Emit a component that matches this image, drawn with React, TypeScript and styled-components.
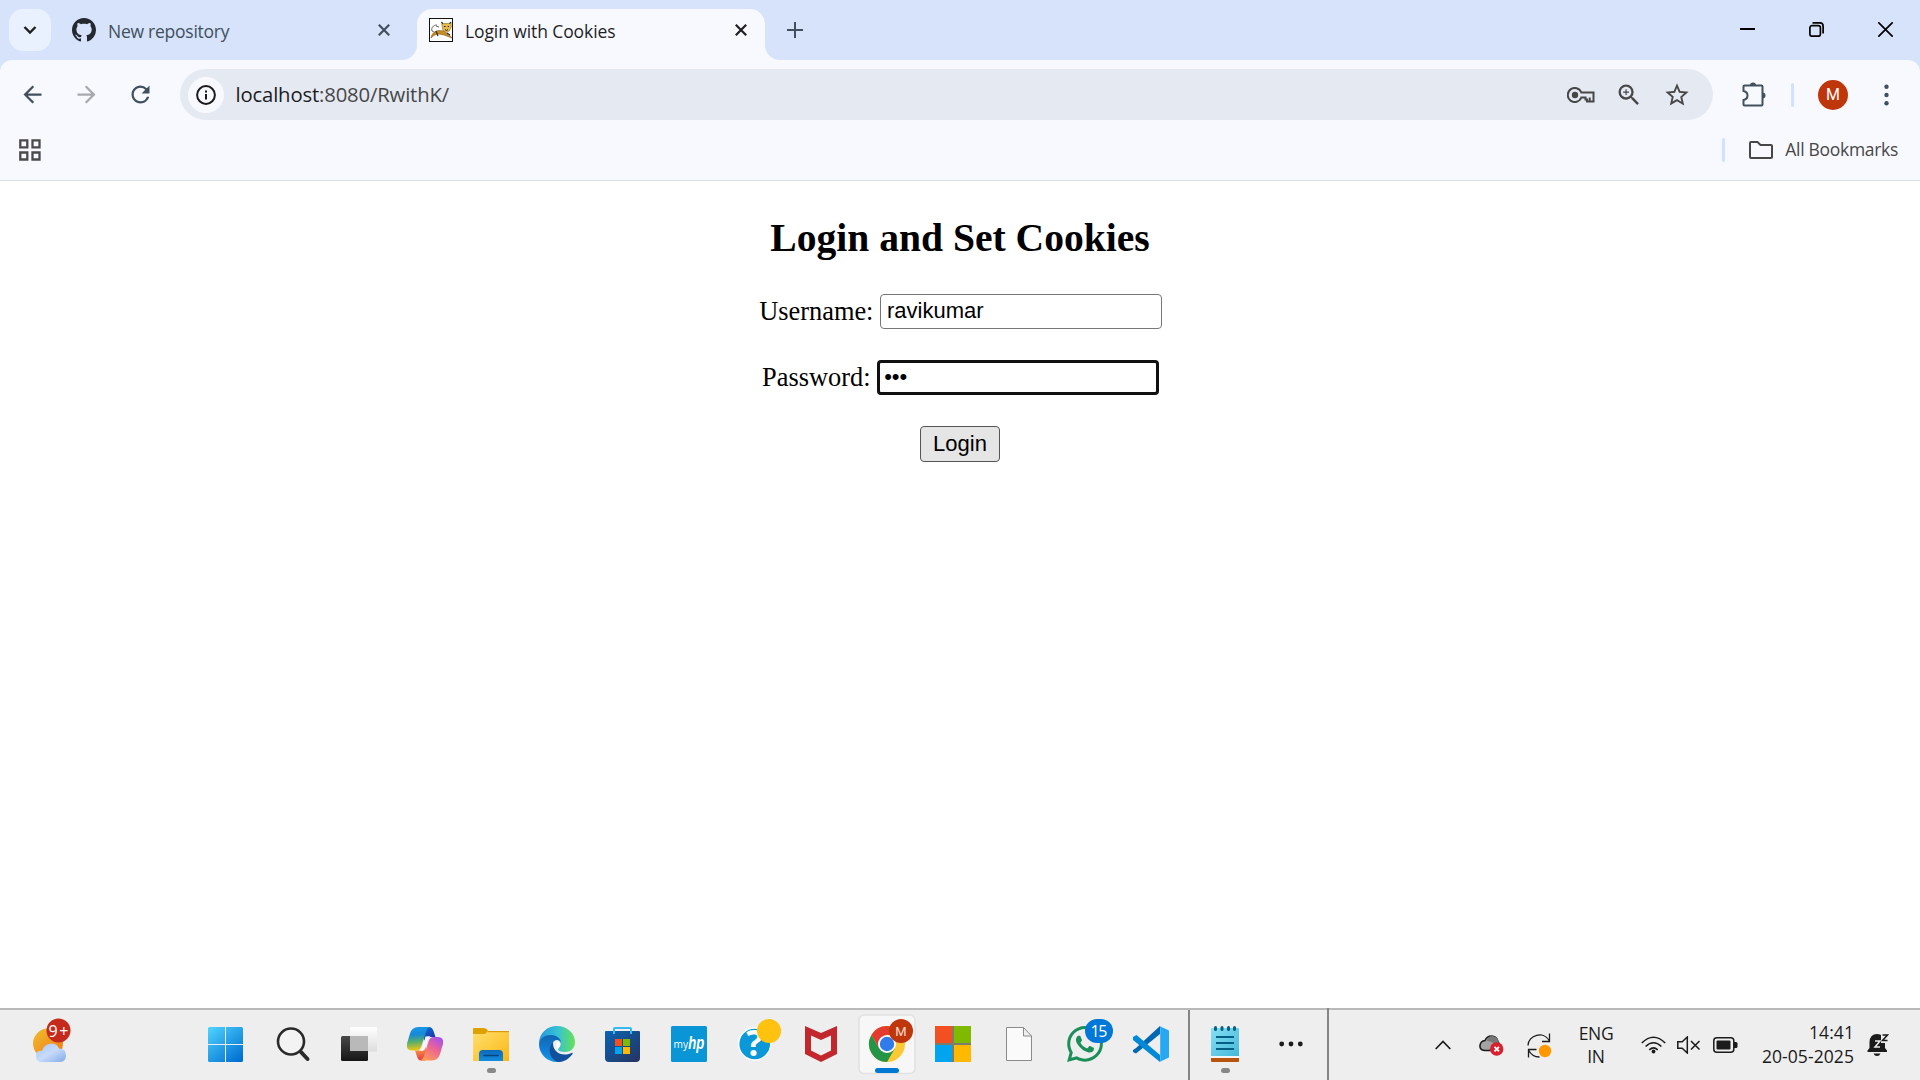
import React from 'react';
import styled, { createGlobalStyle } from 'styled-components';
import { FaWhatsapp } from 'react-icons/fa';
import { MdOutlineZoomIn, MdStarOutline, MdArrowBack, MdArrowForward, MdRefresh } from 'react-icons/md';

const ui = '"Open Sans", "Noto Sans", sans-serif';

const GlobalStyle = createGlobalStyle`
  * { box-sizing: border-box; }
  html, body { margin: 0; padding: 0; background: #fff; overflow: hidden; }
  svg { display: block; flex: none; }
`;

const Screen = styled.div`
  width: 1920px;
  height: 1080px;
  display: flex;
  flex-direction: column;
  background: #fff;
  overflow: hidden;
`;

const TitleBar = styled.div`
  height: 60px;
  flex: none;
  display: flex;
  align-items: flex-start;
  background: #d7e3fa;
  padding: 9px 27px 0 9px;
`;

const TabSearch = styled.div`
  width: 42px;
  height: 42px;
  border-radius: 14px;
  background: #e9f1fe;
  display: flex;
  align-items: center;
  justify-content: center;
`;

const Tab = styled.div<{ $active?: boolean }>`
  position: relative;
  height: ${p => (p.$active ? 51 : 42)}px;
  width: ${p => (p.$active ? 348 : 366)}px;
  padding: ${p => (p.$active ? '0 18px 9px 12px' : '0 27px 0 21px')};
  display: flex;
  align-items: center;
  gap: 12px;
  border-radius: 15px 15px 0 0;
  background: ${p => (p.$active ? '#f8f9ff' : 'transparent')};
  color: ${p => (p.$active ? '#1f1f1f' : '#41505f')};
`;

const Foot = styled.i<{ $side: 'left' | 'right' }>`
  position: absolute;
  bottom: 0;
  ${p => p.$side}: -15px;
  width: 15px;
  height: 15px;
  background: radial-gradient(circle at ${p => (p.$side === 'left' ? '0 0' : '100% 0')}, transparent 14.5px, #f8f9ff 15.5px);
`;

const TabTitle = styled.span<{ $spacing: number }>`
  flex: 1;
  padding-top: 2px;
  font: 17.5px/24px ${ui};
  letter-spacing: ${p => p.$spacing}px;
  white-space: nowrap;
`;

const NewTab = styled.div`
  width: 60px;
  height: 42px;
  display: flex;
  align-items: center;
  justify-content: center;
`;

const WindowButtons = styled.div`
  margin-left: auto;
  height: 41px;
  display: flex;
  align-items: center;
  gap: 54px;
  svg { width: 15px; height: 15px; }
`;

const ToolbarBack = styled.div`
  flex: none;
  background: #d7e3fa;
`;

const Chrome = styled.div`
  height: 121px;
  background: #f8f9ff;
  border-radius: 12px 12px 0 0;
  border-bottom: 1px solid #dcdeec;
`;

const Toolbar = styled.div`
  height: 69px;
  padding: 0 27px 0 19px;
  display: flex;
  align-items: center;
  color: #41505f;
`;

const NavGroup = styled.div`
  display: flex;
  gap: 27px;
  width: 161px;
`;

const Omnibox = styled.div`
  width: 1533px;
  height: 51px;
  flex: none;
  border-radius: 26px;
  background: #e5e9f2;
  padding: 0 22px 0 8px;
  display: flex;
  align-items: center;
  color: #474747;
`;

const SiteInfo = styled.div`
  width: 36px;
  height: 36px;
  border-radius: 50%;
  background: #f8f9ff;
  display: flex;
  align-items: center;
  justify-content: center;
  margin-right: 11.5px;
`;

const Url = styled.span`
  flex: 1;
  padding-bottom: 2px;
  font: 20.3px/30px ${ui};
  letter-spacing: -0.16px;
  b { font-weight: 400; color: #1c1c1e; }
`;

const OmniIcons = styled.div`
  display: flex;
  align-items: center;
  gap: 20px;
`;

const ToolbarEnd = styled.div`
  flex: 1;
  display: flex;
  align-items: center;
  padding-left: 28px;
`;

const Separator = styled.i`
  width: 3px;
  height: 24px;
  border-radius: 2px;
  background: #d0e2ff;
`;

const ExtensionSlot = styled.div`
  width: 50px;
`;

const Avatar = styled.div`
  width: 30px;
  height: 30px;
  border-radius: 50%;
  background: #bf360c;
  color: #fff;
  font: 16px/30px Roboto, sans-serif;
  text-align: center;
  margin: 0 36px 0 24px;
`;

const Bookmarks = styled.div`
  height: 51px;
  padding: 0 22px 9px 19px;
  display: flex;
  align-items: center;
  justify-content: space-between;
`;

const AllBookmarks = styled.div`
  display: flex;
  align-items: center;
  color: #474747;
  svg { margin: 0 12px 0 24px; }
`;

const BookmarkLabel = styled.span`
  padding-bottom: 2px;
  font: 17.5px/24px ${ui};
  letter-spacing: -0.3px;
`;

const Page = styled.main`
  flex: 1;
  min-height: 0;
  display: flex;
  flex-direction: column;
  align-items: center;
  font-family: "Liberation Serif", serif;
  font-size: 26.4px;
  color: #000;
`;

const Heading = styled.h2`
  margin: 35px 0 32px;
  font-size: 39.6px;
  line-height: 45px;
  font-weight: 700;
`;

const Field = styled.label`
  height: 36px;
  display: flex;
  align-items: center;
  gap: 6.6px;
  padding-left: 0.8px;
  margin-bottom: 30px;
  line-height: 36px;
`;

const Input = styled.input<{ $focused?: boolean }>`
  width: 281.6px;
  height: 35px;
  margin: 0;
  border: ${p => (p.$focused ? '3px solid #101010' : '1px solid #767676')};
  padding: 0 ${p => (p.$focused ? 4 : 6)}px;
  border-radius: 4px;
  background: #fff;
  color: #000;
  font: 22px "Liberation Sans", sans-serif;
  outline: none;
`;

const LoginButton = styled.button`
  width: 80px;
  height: 36px;
  margin-top: 1px;
  padding: 0;
  border: 1px solid #555;
  border-radius: 4px;
  background: #e5e5e5;
  color: #000;
  font: 22px "Liberation Sans", sans-serif;
`;

const Taskbar = styled.footer`
  height: 72px;
  flex: none;
  display: flex;
  background: #eee;
  border-top: 2px solid #b9b9b9;
  color: #1b1b1b;
`;

const Weather = styled.div`
  width: 192px;
`;

const Cell = styled.div`
  width: 66px;
  height: 70px;
  flex: none;
  svg { overflow: visible; }
`;

const TaskDivider = styled.i<{ $tall?: boolean }>`
  width: 2px;
  height: ${p => (p.$tall ? 72 : 70)}px;
  margin: ${p => (p.$tall ? '-2px 0 0 3px' : '0 2px 0 6px')};
  background: #858585;
`;

const Tray = styled.div`
  flex: 1;
  height: 70px;
  padding-left: 106px;
  display: flex;
  align-items: center;
`;

const TrayIcon = styled.div<{ $gap: number; $before?: number }>`
  margin-left: ${p => p.$before || 0}px;
  margin-right: ${p => p.$gap}px;
`;

const TrayText = styled.div<{ $width: number; $align: string; $spacing: number; $line: number; $lift?: number }>`
  width: ${p => p.$width}px;
  padding-bottom: ${p => p.$lift || 0}px;
  text-align: ${p => p.$align};
  font: 17.5px/${p => p.$line}px ${ui};
  letter-spacing: ${p => p.$spacing}px;
  white-space: nowrap;
`;

const CellSvg = ({ children, width = 66 }: { children: React.ReactNode; width?: number }) => (
  <svg width={width} height="70" viewBox={`0 0 ${width} 70`}>{children}</svg>
);

const CloseX = () => (
  <svg width="12" height="12" viewBox="0 0 12 12" stroke="currentColor" strokeWidth="2.2">
    <path d="M.8.8 11.2 11.2M11.2.8.8 11.2" />
  </svg>
);

const GithubMark = () => (
  <svg width="24" height="24" viewBox="0 0 16 16" fill="#24292f">
    <path d="M8 0C3.58 0 0 3.58 0 8c0 3.54 2.29 6.53 5.47 7.59.4.07.55-.17.55-.38 0-.19-.01-.82-.01-1.49-2.01.37-2.53-.49-2.69-.94-.09-.23-.48-.94-.82-1.13-.28-.15-.68-.52-.01-.53.63-.01 1.08.58 1.23.82.72 1.21 1.87.87 2.33.66.07-.52.28-.87.51-1.07-1.78-.2-3.64-.89-3.64-3.95 0-.87.31-1.59.82-2.15-.08-.2-.36-1.02.08-2.12 0 0 .67-.21 2.2.82.64-.18 1.32-.27 2-.27s1.36.09 2 .27c1.53-1.04 2.2-.82 2.2-.82.44 1.1.16 1.92.08 2.12.51.56.82 1.27.82 2.15 0 3.07-1.87 3.75-3.65 3.95.29.25.54.73.54 1.48 0 1.07-.01 1.93-.01 2.2 0 .21.15.46.55.38A8.01 8.01 0 0 0 16 8c0-4.42-3.58-8-8-8Z" />
  </svg>
);

const TomcatIcon = () => (
  <svg width="24" height="24" viewBox="0 0 24 24">
    <rect x=".5" y=".5" width="23" height="23" fill="#fff" stroke="#111" />
    <path d="M8 7C4 7 2 10 3 13l2 1M7 8l3 1" fill="none" stroke="#666" strokeWidth="1" />
    <path d="M2 20c1-5 4-7 8-7.500l5 .5 3 3c2 1 4 2 5 4l-8-3-5-1c-3 0-5 1-8 4Z" fill="#c98d22" stroke="#7b5a22" strokeWidth=".6" />
    <path d="m7 13 2 5M18 15l3 2" stroke="#333" strokeWidth="1.300" />
    <path d="m12.500 4 2 1.500h5L22 4l.3 5-2 4-3 1.500-3.500-2.500Z" fill="#e6b94a" stroke="#88712f" strokeWidth=".6" />
    <path d="m12.500 4 1.500 2M22 4l-1.500 2M15 8.500h1.500M18.700 8.500h1.300M16 11.500l1.500 1 1.500-1" stroke="#222" strokeWidth="1" fill="none" />
  </svg>
);

const TaskIcons: Record<string, React.ReactNode> = {
  start: (
    <CellSvg>
      <defs><linearGradient id="win" gradientUnits="userSpaceOnUse" x1="16" y1="17" x2="46" y2="52"><stop stopColor="#51d5ff" /><stop offset="1" stopColor="#0070d2" /></linearGradient></defs>
      <path fill="url(#win)" d="M17.500 17H33v17H16V18.500Q16 17 17.500 17ZM34 17h15.500Q51 17 51 18.500V34H34ZM16 35h17v17H17.500Q16 52 16 50.500ZM34 35h17v15.500Q51 52 49.500 52H34Z" />
    </CellSvg>
  ),
  search: (
    <CellSvg><g fill="none" stroke="#2a2a2a"><path d="m42.500 41.500 7 7.500" strokeWidth="4" strokeLinecap="round" /><circle cx="33" cy="31.500" r="13" strokeWidth="2.600" fill="#f3f3f3" /></g></CellSvg>
  ),
  taskview: (
    <CellSvg>
      <defs><linearGradient id="tvd" x2="0" y2="1"><stop stopColor="#484848" /><stop offset="1" stopColor="#161616" /></linearGradient><linearGradient id="tvl" x2="0" y2="1"><stop stopColor="#fff" /><stop offset="1" stopColor="#ddd" /></linearGradient></defs>
      <rect x="26" y="17" width="27" height="24.500" rx="1" fill="url(#tvl)" /><rect x="17" y="26" width="27" height="25" rx="1.500" fill="url(#tvd)" /><path d="M26 26h18v15H26Z" fill="#b9b9b9" />
    </CellSvg>
  ),
  copilot: (
    <CellSvg>
      <defs>
        <linearGradient id="cpA" x2=".1" y2="1"><stop stopColor="#1b9bea" /><stop offset=".35" stopColor="#1489d8" /><stop offset=".65" stopColor="#56ad70" /><stop offset="1" stopColor="#e5c714" /></linearGradient>
        <linearGradient id="cpB" x1=".8" x2=".2" y2="1"><stop stopColor="#a750ee" /><stop offset=".45" stopColor="#eb6494" /><stop offset="1" stopColor="#ff9f52" /></linearGradient>
        <linearGradient id="cpC" x2=".5" y2="1"><stop stopColor="#0c74db" /><stop offset="1" stopColor="#1d36a8" /></linearGradient>
        <linearGradient id="cpD" x2=".2" y2="1"><stop stopColor="#ffad43" /><stop offset="1" stopColor="#e53d43" /></linearGradient>
      </defs>
      <path d="M35 17h4q3 0 4.500 4l2 6h-5q-4 0-5.500 4l-6-8Z" fill="url(#cpC)" />
      <path d="M35 50.500h-4q-3 0-4-4l-2-6h5q4 0 5-4l6 8Z" fill="url(#cpD)" />
      <path d="M28 17h12q-3 1-4 5l-4.500 14q-1.500 4.500-5 4.500H22q-6 0-5-7l3-10q2-6.500 8-6.500Z" fill="url(#cpA)" />
      <path d="M42 50.500H30q3-1 4-4.500l4.500-14.500q1.500-4.500 5-4.500H48q6 0 5 7l-3 10q-2 6.500-8 6.500Z" fill="url(#cpB)" />
      <path d="m35.500 26.500 3-.2h2q-2 1-3 4L35 39q-1 2-4 2h-1.500q2-1 3-4Z" fill="#f8f4ff" />
    </CellSvg>
  ),
  explorer: (
    <CellSvg>
      <defs><linearGradient id="fold" x2="1" y2="1"><stop stopColor="#ffe070" /><stop offset="1" stopColor="#fbb713" /></linearGradient><linearGradient id="foldb" x2="0" y2="1"><stop stopColor="#0d68b8" /><stop offset="1" stopColor="#138ee0" /></linearGradient></defs>
      <path d="M17 19q0-1 1-1h10q2 0 3 1.500L33 22v5H17Z" fill="#dfa100" /><path d="M17 24h12l3-3h21v30H17Z" fill="url(#fold)" /><path d="M32 21h21v1.200H32Z" fill="#d99a07" />
      <path d="M23 51v-7q0-4 4-4h16q4 0 4 4v7Z" fill="url(#foldb)" /><path d="M28 45.500h14" stroke="#07457f" strokeWidth="1.600" strokeLinecap="round" /><rect x="31" y="58" width="9" height="5" rx="2.500" fill="#888" />
    </CellSvg>
  ),
  edge: (
    <CellSvg>
      <defs><linearGradient id="ed1" y1=".5" x2="1" y2=".5"><stop stopColor="#2696da" /><stop offset=".5" stopColor="#35c1d8" /><stop offset="1" stopColor="#66e256" /></linearGradient><linearGradient id="ed2" x2="0" y2="1"><stop stopColor="#1165b0" /><stop offset=".5" stopColor="#127bd2" /><stop offset="1" stopColor="#1595e6" /></linearGradient></defs>
      <path d="M17 34C17 23 25 16 35 16c10 0 18 7 18 16 0 6-4 10-10 10-4 0-7-1-7-3 0-1 2-2 2-5 0-4-4-7-9-7-5 0-10 2-12 7Z" fill="url(#ed1)" />
      <path d="M17 34c1-6 6-9 12-9 6 0 10 4 10 7-1-1-2-2-4-2-3 0-5 3-5 7 0 7 5 12 11 14-2 1-4 1-6 1-10 0-18-8-18-18Z" fill="url(#ed2)" />
      <path d="M31 32c-7 8-2 18 5 20 6 0 11-3 14.500-8 .6-1-.4-1.500-1-1-9 4-19 0-18.500-11Z" fill="#11519b" />
      <path d="M36 39c-3-3-1-7 0-8 2 1 3 2 2.500 4-.5 2-2 3-2.500 4Z" fill="#fff" />
    </CellSvg>
  ),
  store: (
    <CellSvg>
      <defs><linearGradient id="st" x2="1" y2="1"><stop stopColor="#0a64b4" /><stop offset="1" stopColor="#25335d" /></linearGradient></defs>
      <path d="M17 22q0-1 1-1h33q1 0 1 1v26q0 4-4 4H21q-4 0-4-4Z" fill="url(#st)" /><path d="M26 24v-5q0-1 1-1h15q1 0 1 1v5" fill="none" stroke="#34baf2" strokeWidth="2" />
      <path d="M27 29h7v7h-7Z" fill="#f25022" /><path d="M35 29h7v7h-7Z" fill="#7fba00" /><path d="M27 37h7v7h-7Z" fill="#00a4ef" /><path d="M35 37h7v7h-7Z" fill="#ffb900" />
    </CellSvg>
  ),
  myhp: (
    <CellSvg>
      <rect x="17" y="16" width="36" height="36" rx="1.500" fill="#0a96d6" />
      <text x="19.500" y="37.500" fill="#fff" fontFamily="Open Sans" fontSize="11" textLength="14.500" lengthAdjust="spacingAndGlyphs">my</text>
      <text x="34.200" y="39" fill="#fff" fontFamily="Liberation Sans" fontSize="18" fontWeight="700" fontStyle="italic" textLength="16" lengthAdjust="spacingAndGlyphs">hp</text>
    </CellSvg>
  ),
  help: (
    <CellSvg>
      <circle cx="34.700" cy="34" r="16" fill="#0a98d8" stroke="#fff" strokeWidth="1.400" />
      <text x="34.700" y="46" fill="#fff" fontFamily="Open Sans" fontSize="35" fontWeight="700" textAnchor="middle">?</text>
      <circle cx="49" cy="21" r="12" fill="#ffc20e" />
    </CellSvg>
  ),
  mcafee: (
    <CellSvg><path d="m19 16 16 7 16-7v28l-16 8-16-8Zm6 9.500v15l10 5 10-5v-15L35 30Z" fill="#c1272d" fillRule="evenodd" /></CellSvg>
  ),
  chrome: (
    <CellSvg>
      <rect x="7" y="5" width="56" height="58.500" rx="5" fill="#f7f7f7" stroke="#e1e1e1" strokeWidth="1.500" />
      <circle cx="35" cy="34" r="18" fill="#fcc934" />
      <path d="M19.400 25A18 18 0 0 1 50.600 25H35L27.200 38.500Z" fill="#e33b2e" /><path d="M19.400 25A18 18 0 0 0 35 52l7.800-13.500H27.200Z" fill="#249447" />
      <circle cx="35" cy="34" r="9" fill="#fff" /><circle cx="35" cy="34" r="7.200" fill="#2f7bea" />
      <circle cx="49" cy="21" r="12" fill="#bf360c" /><text x="49" y="26" fill="#f8dcd3" fontFamily="Roboto" fontSize="13" textAnchor="middle">M</text>
      <rect x="23" y="58" width="24" height="5" rx="2.500" fill="#0078d4" />
    </CellSvg>
  ),
  microsoft: (
    <CellSvg><path d="M17 16h36v36H17Z" fill="#7d7b6b" /><path d="M17 16h17v17H17Z" fill="#f25022" /><path d="M36 16h17v17H36Z" fill="#7fba00" /><path d="M17 35h17v17H17Z" fill="#00a4ef" /><path d="M36 35h17v17H36Z" fill="#ffb900" /></CellSvg>
  ),
  file: (
    <CellSvg><path d="M22.500 17.500h17l8 8.500v24.500h-25Z M39.500 17.500V26h8" fill="#fafafa" stroke="#8b8b8b" /></CellSvg>
  ),
  whatsapp: (
    <CellSvg>
      <g transform="translate(14.500 13.500)"><FaWhatsapp size={41} color="#1a8f58" /></g>
      <rect x="35" y="9" width="28" height="24" rx="12" fill="#0078d8" /><text x="49" y="27" fill="#fff" fontFamily="Open Sans" fontSize="16" textAnchor="middle" textLength="17">15</text>
    </CellSvg>
  ),
  vscode: (
    <CellSvg>
      <path d="m44 16-24 22-3 2v2l3 1.500L44 24Z" fill="#0067b2" /><path d="m17 27 3.500-2 23.500 20v7L17 30Z" fill="#0089d6" /><path d="M43.500 16 53 20.500v27L43.500 52q.7-.5.700-2V18q0-1-.700-2Z" fill="#27a8f5" />
    </CellSvg>
  ),
  notepad: (
    <CellSvg>
      <defs><linearGradient id="np" x2="1" y2="1"><stop stopColor="#86e0f4" /><stop offset="1" stopColor="#45b8da" /></linearGradient></defs>
      <path d="M19 45h28v6q0 1-1 1H20q-1 0-1-1Z" fill="#b9540f" /><path d="M19 44h28v4H19Z" fill="#f5f5f5" /><path d="M19 19q0-1 1-1h26q1 0 1 1v27H19Z" fill="url(#np)" />
      <path d="M24 27h18M24 33h18M24 39h18" stroke="#055f83" strokeWidth="1.800" /><path d="M23.500 17.500v2M30 17.500v2M36.500 17.500v2M42.500 17.500v2" stroke="#07627f" strokeWidth="3" strokeLinecap="round" /><rect x="29" y="58" width="9" height="5" rx="2.500" fill="#888" />
    </CellSvg>
  ),
  more: (
    <CellSvg><g fill="#1b1b1b"><circle cx="23.700" cy="34" r="2.400" /><circle cx="33" cy="34" r="2.400" /><circle cx="42.300" cy="34" r="2.400" /></g></CellSvg>
  ),
};

const pinned = ['start', 'search', 'taskview', 'copilot', 'explorer', 'edge', 'store', 'myhp', 'help', 'mcafee', 'chrome', 'microsoft', 'file', 'whatsapp', 'vscode'];
const running = ['notepad', 'more'];

export default function App() {
  return (
    <Screen>
      <GlobalStyle />
      <TitleBar>
        <TabSearch>
          <svg width="14" height="10" viewBox="0 0 14 10" fill="none" stroke="#1f1f1f" strokeWidth="2.4"><path d="m1.500 2 5.500 5.500L12.500 2" /></svg>
        </TabSearch>
        <Tab>
          <GithubMark />
          <TabTitle $spacing={-0.25}>New repository</TabTitle>
          <CloseX />
        </Tab>
        <Tab $active>
          <Foot $side="left" />
          <TomcatIcon />
          <TabTitle $spacing={-0.1}>Login with Cookies</TabTitle>
          <CloseX />
          <Foot $side="right" />
        </Tab>
        <NewTab>
          <svg width="16" height="16" viewBox="0 0 16 16" stroke="#41505f" strokeWidth="2"><path d="M8 0v16M0 8h16" /></svg>
        </NewTab>
        <WindowButtons>
          <svg viewBox="0 0 15 15"><path d="M0 6h15v2H0Z" /></svg>
          <svg viewBox="0 0 15 15" fill="none" stroke="#000" strokeWidth="1.700"><rect x=".9" y="3.700" width="10.500" height="10.500" rx="2" /><path d="M3.500.9H11q3.100 0 3.100 3.100v7.500" /></svg>
          <svg viewBox="0 0 15 15" stroke="#000" strokeWidth="1.700"><path d="m.3.3 14.400 14.400M14.700.3.300 14.700" /></svg>
        </WindowButtons>
      </TitleBar>
      <ToolbarBack>
        <Chrome>
          <Toolbar>
            <NavGroup>
              <MdArrowBack size={27} />
              <MdArrowForward size={27} color="#a6a9ae" />
              <MdRefresh size={27} />
            </NavGroup>
            <Omnibox>
              <SiteInfo>
                <svg width="20" height="20" viewBox="0 0 20 20" fill="none" stroke="#1b1b1b" strokeWidth="2"><circle cx="10" cy="10" r="8.900" /><path d="M10 9v5.500M10 5.500v2" /></svg>
              </SiteInfo>
              <Url><b>localhost</b>:8080/RwithK/</Url>
              <OmniIcons>
                <svg width="28" height="16" viewBox="0 0 28 16" fill="none" stroke="#474747" strokeWidth="2"><path d="M14.300 5.500A7 7 0 1 0 14.300 10.500h4.200v2h1.500v2h6.500v-9Z" /><circle cx="8" cy="8" r="3.200" fill="#474747" stroke="none" /><path d="M22.700 14v-3.500" /></svg>
                <MdOutlineZoomIn size={28} />
                <MdStarOutline size={28} />
              </OmniIcons>
            </Omnibox>
            <ToolbarEnd>
              <ExtensionSlot>
                <svg width="27" height="27" viewBox="0 0 27 27" fill="none" stroke="#41505f" strokeWidth="2">
                  <path d="M2.500 5.500q0-1 1-1h17q1 0 1 1v18q0 1-1 1h-17q-1 0-1-1v-4.500q4-.8 4-4.500t-4-4.500Z" /><path d="M9 4.500a3 3 0 0 1 6 0ZM21.500 11.500a3 3 0 0 1 0 6Z" fill="#41505f" stroke="none" />
                </svg>
              </ExtensionSlot>
              <Separator />
              <Avatar>M</Avatar>
              <svg width="5" height="22" viewBox="0 0 5 22" fill="#41505f"><circle cx="2.500" cy="2.800" r="2.200" /><circle cx="2.500" cy="11" r="2.200" /><circle cx="2.500" cy="19.200" r="2.200" /></svg>
            </ToolbarEnd>
          </Toolbar>
          <Bookmarks>
            <svg width="22" height="22" viewBox="0 0 22 22" fill="none" stroke="#4b4b4b" strokeWidth="2.300"><path d="M1.300 1.300h7v7h-7ZM13.500 1.300h7v7h-7ZM1.300 13.500h7v7h-7ZM13.500 13.500h7v7h-7Z" /></svg>
            <AllBookmarks>
              <Separator />
              <svg width="24" height="18" viewBox="0 0 24 18" fill="none" stroke="#474747" strokeWidth="2"><path d="M1 2q0-1 1-1h6.500l3 3H22q1 0 1 1v11q0 1-1 1H2q-1 0-1-1Z" /></svg>
              <BookmarkLabel>All Bookmarks</BookmarkLabel>
            </AllBookmarks>
          </Bookmarks>
        </Chrome>
      </ToolbarBack>
      <Page>
        <Heading>Login and Set Cookies</Heading>
        <Field>Username:<Input type="text" defaultValue="ravikumar" /></Field>
        <Field>Password:<Input type="password" defaultValue="abc" $focused /></Field>
        <LoginButton>Login</LoginButton>
      </Page>
      <Taskbar>
        <Weather>
          <CellSvg width={100}>
            <defs><linearGradient id="sun" x2="1" y2="1"><stop stopColor="#edbd31" /><stop offset="1" stopColor="#f5760e" /></linearGradient><linearGradient id="cl" x2="1" y2="1"><stop stopColor="#a8c6f5" /><stop offset=".5" stopColor="#c7dbfb" /><stop offset="1" stopColor="#81a9e8" /></linearGradient></defs>
            <circle cx="48" cy="33.500" r="15" fill="url(#sun)" /><path d="M42 52q-6 0-6-6t6-5q2-7 9-7.500 6 0 8 5 7 0 7 7t-7 6.500Z" fill="url(#cl)" />
            <circle cx="58.500" cy="20.500" r="12" fill="#c42b1c" /><text x="58.500" y="26.500" fill="#fff" fontFamily="Open Sans" fontSize="16" textAnchor="middle" textLength="20">9+</text>
          </CellSvg>
        </Weather>
        {pinned.map(name => <Cell key={name}>{TaskIcons[name]}</Cell>)}
        <TaskDivider />
        {running.map(name => <Cell key={name}>{TaskIcons[name]}</Cell>)}
        <TaskDivider $tall />
        <Tray>
          <TrayIcon $gap={28}><svg width="16" height="10" viewBox="0 0 16 10" fill="none" stroke="#1b1b1b" strokeWidth="1.700"><path d="m.7 9 7.300-7.500L15.300 9" /></svg></TrayIcon>
          <TrayIcon $gap={23}>
            <svg width="25" height="22" viewBox="0 0 25 22"><path d="M5.500 16.500q-5-.5-4.500-5t5-5Q8 2 12.500 2q5 0 6.500 5.500l1 2-9 7Z" fill="#a3a3a3" stroke="#1b1b1b" strokeWidth="1.600" /><path d="M8 7q5 0 8 4l4-3q-2-6-7-6-4 0-5 5Z" fill="#777" /><circle cx="17.700" cy="15" r="6.700" fill="#d8202e" /><path d="m15.500 12.800 4.500 4.500m0-4.500-4.500 4.500" stroke="#fff" strokeWidth="1.900" /></svg>
          </TrayIcon>
          <TrayIcon $gap={24}>
            <svg width="25" height="25" viewBox="0 0 25 25" fill="none" stroke="#1b1b1b" strokeWidth="1.300"><path d="M1 12.500C1 2 17-2.500 22.500 8M22.500.500v8H15M1.500 24.500v-8h8M1.500 17q3.500 7 11 7" /><circle cx="18" cy="18" r="6.200" fill="#ff9800" stroke="none" /></svg>
          </TrayIcon>
          <TrayText $width={40} $align="center" $spacing={-0.3} $line={23}>ENG<br />IN</TrayText>
          <TrayIcon $gap={11} $before={25}>
            <svg width="25" height="18" viewBox="0 0 25 18" fill="none" stroke="#1b1b1b" strokeWidth="1.600"><path d="M.8 7q11.700-11.500 23.400 0M4.600 10.500q7.900-7.500 15.800 0M8.300 13.800q4.200-4 8.400 0" /><circle cx="12.500" cy="15.500" r="1.900" fill="#1b1b1b" stroke="none" /></svg>
          </TrayIcon>
          <TrayIcon $gap={12}>
            <svg width="24" height="18" viewBox="0 0 24 18" fill="none" stroke="#1b1b1b" strokeWidth="1.500"><path d="M.8 5.800h4.400L10.300 1v16l-5.100-4.800H.8ZM14 5l8.500 8.500M22.500 5 14 13.500" /></svg>
          </TrayIcon>
          <TrayIcon $gap={22}>
            <svg width="25" height="16" viewBox="0 0 25 16"><rect x=".8" y=".8" width="20" height="14.400" rx="3" fill="none" stroke="#1b1b1b" strokeWidth="1.500" /><rect x="3.500" y="3.500" width="14" height="9" rx="1" fill="#1b1b1b" /><path d="M21 5h2q1.500 0 1.500 1.500v3Q24.500 11 23 11h-2Z" fill="#1b1b1b" /></svg>
          </TrayIcon>
          <TrayText $width={94} $align="right" $spacing={0.08} $line={24} $lift={2}>14:41<br />20-05-2025</TrayText>
          <TrayIcon $gap={0} $before={13}>
            <svg width="22" height="24" viewBox="0 0 22 24" fill="#1b1b1b"><path d="M10 1q-7 0-7.500 8v6L.5 17.500V19H20v-1.500L18 15V9Q17 1 10 1Z" /><path d="M6.500 20.500h7q-1 2.500-3.500 2.500t-3.500-2.500Z" /><path d="M14 0h8v10h-8Z" fill="#eee" /><path d="M15.500 2h5l-5 5.500h5" fill="none" stroke="#1b1b1b" strokeWidth="1.600" /><path d="M8 8h5l-5 6h5" fill="none" stroke="#eee" strokeWidth="1.500" /></svg>
          </TrayIcon>
        </Tray>
      </Taskbar>
    </Screen>
  );
}
